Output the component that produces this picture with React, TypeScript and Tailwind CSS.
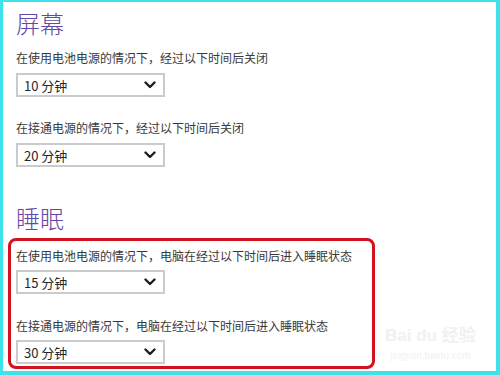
import React from 'react'

const font = { fontFamily: '"Noto Sans CJK SC", "Noto Sans", sans-serif' }

function Chevron() {
  return (
    <svg width="12" height="8" viewBox="0 0 12 8" className="shrink-0">
      <path d="M1.5 1.5 L6 6 L10.5 1.5" fill="none" stroke="#1f1f1f" strokeWidth="2.4" strokeLinecap="round" strokeLinejoin="round" />
    </svg>
  )
}

function Dropdown({ value, className = '' }: { value: string; className?: string }) {
  return (
    <div className={`flex h-[24px] w-[149px] items-center justify-between border-2 border-[#cbcbcb] bg-white pl-[6px] pr-[7px] ${className}`}>
      <span className="text-[13px] leading-none text-[#262626]">{value}</span>
      <Chevron />
    </div>
  )
}

function Label({ text, className = '' }: { text: string; className?: string }) {
  return <div className={`h-4 text-[12px] leading-4 text-[#3a3a3a] whitespace-nowrap ${className}`}>{text}</div>
}

export default function App() {
  return (
    <div className="h-[375px] w-[500px] overflow-hidden" style={font}>
      <div className="relative h-full w-full border-b-[4px] border-l-[3px] border-r-[4px] border-t-[2px] border-[#3ee2ea] bg-white pl-[5px]">
        <div className="pl-[8px]">
          <h1 className="mt-[6px] h-[30px] text-[24px] font-light leading-[30px] text-[#6448a8]">屏幕</h1>
          <Label text="在使用电池电源的情况下，经过以下时间后关闭" className="mt-[12px]" />
          <Dropdown value="10 分钟" className="mt-[7px]" />
          <Label text="在接通电源的情况下，经过以下时间后关闭" className="mt-[23px]" />
          <Dropdown value="20 分钟" className="mt-[7px]" />
          <h1 className="mt-[36px] h-[30px] text-[24px] font-light leading-[30px] text-[#6448a8]">睡眠</h1>
        </div>

        <div className="mt-[5px] w-[367px] rounded-[8px] border-[3px] border-[#d3121c] px-[5px] pb-[2px] pt-[7px]">
          <Label text="在使用电池电源的情况下，电脑在经过以下时间后进入睡眠状态" />
          <Dropdown value="15 分钟" className="mt-[6px]" />
          <Label text="在接通电源的情况下，电脑在经过以下时间后进入睡眠状态" className="mt-[24px]" />
          <Dropdown value="30 分钟" className="mt-[6px]" />
        </div>

        <div className="pointer-events-none absolute left-[382px] top-[322px] flex flex-col items-center text-[#f1f1f1]">
          <div className="whitespace-nowrap text-[17px] font-bold leading-6" style={{ fontFamily: '"Liberation Sans", "Noto Sans CJK SC", sans-serif' }}>Bai du 经验</div>
          <div className="whitespace-nowrap text-[10px] leading-4" style={{ fontFamily: '"Liberation Sans", sans-serif' }}>jingyan.baidu.com</div>
        </div>
      </div>
    </div>
  )
}
